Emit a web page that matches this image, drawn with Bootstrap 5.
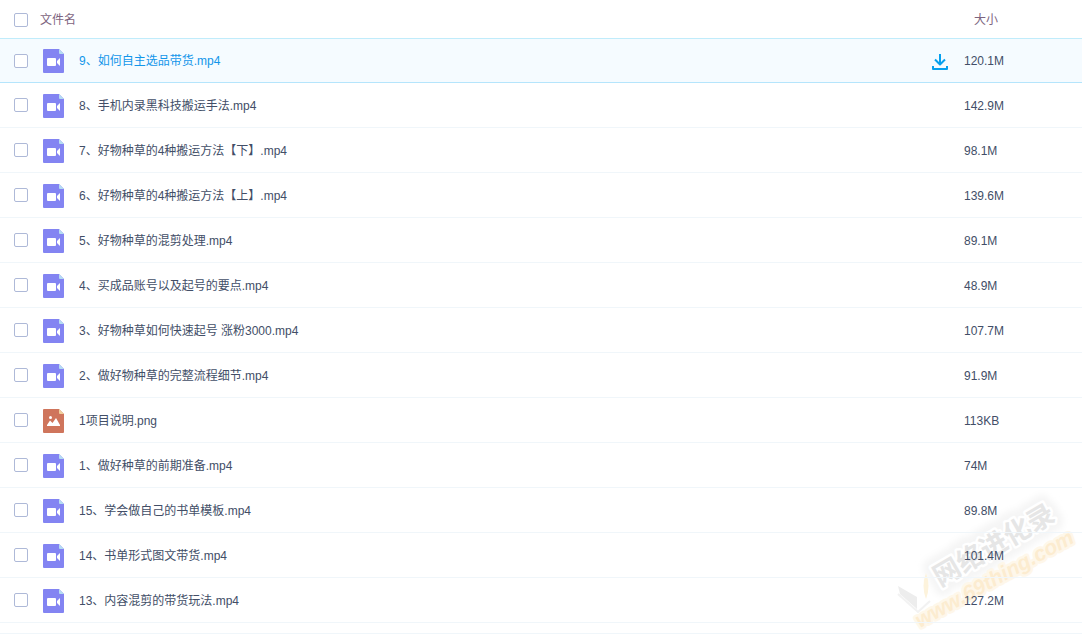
<!DOCTYPE html>
<html lang="zh-CN">
<head>
<meta charset="utf-8">
<meta name="viewport" content="width=device-width, initial-scale=1">
<title>文件列表</title>
<link href="https://cdn.jsdelivr.net/npm/bootstrap@5.3.0/dist/css/bootstrap.min.css" rel="stylesheet">
<style>
  body { font: 12px/18px "Liberation Sans", "Noto Sans CJK SC", sans-serif; color: #424e67; background: #fff; overflow-x: hidden; }
  .file-list { isolation: isolate; }
  .file-table { --bs-table-color: #424e67; --bs-table-bg: transparent; font-size: 12px; table-layout: fixed; border-collapse: separate; border-spacing: 0; }
  .file-table > :not(caption) > * > * { padding: 0; border: 0; height: 45px; border-bottom: 1px solid #f0f6fa; box-shadow: none; vertical-align: middle; }
  .file-table > thead > tr > th { height: 38px; border: 0; padding-top: 2px; font-weight: 400; color: #7d6480; }
  .file-table > tbody > tr > td { padding-top: 1px; }
  .file-table > tbody > tr > td:first-child { padding-top: 0; }
  .file-table > tbody > tr.is-current > td { padding-top: 0; border-top: 1px solid #c0ecfb; border-bottom-color: #b5e5fc; background: #f5fbff; }
  .col-check { width: 40px; }
  .col-icon { width: 39px; }
  .col-action { width: 36px; }
  .col-size { width: 118px; }
  .size-head { padding-left: 10px; }
  .file-table .form-check-input { width: 14px; height: 14px; margin: 0 0 0 14px; border: 1px solid #aeb9d8; border-radius: 2px; }
  .file-link { color: inherit; text-decoration: none; }
  .is-current .file-link { color: #1296ea; }
  .file-icon { width: 21px; height: 24px; margin-left: 3px; }
  .download-btn { width: 16px; height: 16px; color: #06a0ee; margin-top: 3px; margin-left: 4px; }
  .list-end { margin-top: 10px; border-top: 1px solid #f0f6fa; }
  .watermark { right: 0; bottom: 0; width: 190px; height: 144px; z-index: -1; pointer-events: none; }
</style>
</head>
<body>
<svg class="d-none" aria-hidden="true">
  <symbol id="video" viewBox="0 0 21 24">
    <path fill="#8384f2" d="M1 0H16l5 5v18a1 1 0 0 1-1 1H1a1 1 0 0 1-1-1V1a1 1 0 0 1 1-1z"/>
    <path fill="#b5dcf2" d="M16 0l5 5h-4a1 1 0 0 1-1-1z"/>
    <rect x="4" y="9" width="9" height="8" rx="1" fill="#fff"/>
    <path fill="#fff" d="M14 12l3-3v8l-3-3z"/>
  </symbol>
  <symbol id="image" viewBox="0 0 21 24">
    <path fill="#cf755c" d="M1 0H16l5 5v18a1 1 0 0 1-1 1H1a1 1 0 0 1-1-1V1a1 1 0 0 1 1-1z"/>
    <path fill="#f0cf9c" d="M16 0l5 5h-4a1 1 0 0 1-1-1z"/>
    <circle cx="7.500" cy="8.500" r="1.500" fill="#fff"/>
    <path fill="#fff" d="M4 17v-1l3-4.500 2.500 2.500L13 9l4 7v1z"/>
  </symbol>
</svg>
<main class="file-list position-relative overflow-hidden">
  <table class="table file-table mb-0">
    <colgroup><col class="col-check"><col class="col-icon"><col><col class="col-action"><col class="col-size"></colgroup>
    <thead>
      <tr>
        <th scope="col"><input class="form-check-input d-block" type="checkbox" aria-label="全选"></th>
        <th scope="col" colspan="3">文件名</th>
        <th scope="col"><span class="size-head">大小</span></th>
      </tr>
    </thead>
    <tbody id="files"></tbody>
  </table>
  <div class="list-end"></div>
  <svg class="watermark position-absolute" viewBox="0 0 190 144" aria-hidden="true">
    <defs><filter id="glow" x="-20%" y="-60%" width="140%" height="220%"><feGaussianBlur stdDeviation="3"/></filter></defs>
    <g transform="translate(48 97) rotate(-30)" font-family="'Noto Sans CJK SC',sans-serif" font-weight="700" font-size="27">
      <text fill="#f5f5f5" stroke="#f5f5f5" stroke-width="16" stroke-linejoin="round" filter="url(#glow)">网络进化录</text>
      <text fill="#e6e6e6" stroke="#fff" stroke-width="5" stroke-linejoin="round" paint-order="stroke">网络进化录</text>
    </g>
    <path fill="#ededed" d="M6 96l19 11v12L8 104z"/>
    <path fill="none" stroke="#f2f2f2" stroke-width="2" d="M6 104l20 18 12-11"/>
    <path fill="#fdf3dc" d="M34 83q5 13 0 26-5-13 0-26z"/>
    <text transform="translate(28 138) rotate(-29)" font-family="'Liberation Sans',sans-serif" font-weight="700" font-style="italic" font-size="21" fill="#fcecd0" stroke="#fef7ea" stroke-width="5" stroke-linejoin="round" paint-order="stroke">www.69thing.com</text>
  </svg>
</main>
<script>
  const files = [
    ["9、如何自主选品带货.mp4", "120.1M"],
    ["8、手机内录黑科技搬运手法.mp4", "142.9M"],
    ["7、好物种草的4种搬运方法【下】.mp4", "98.1M"],
    ["6、好物种草的4种搬运方法【上】.mp4", "139.6M"],
    ["5、好物种草的混剪处理.mp4", "89.1M"],
    ["4、买成品账号以及起号的要点.mp4", "48.9M"],
    ["3、好物种草如何快速起号 涨粉3000.mp4", "107.7M"],
    ["2、做好物种草的完整流程细节.mp4", "91.9M"],
    ["1项目说明.png", "113KB"],
    ["1、做好种草的前期准备.mp4", "74M"],
    ["15、学会做自己的书单模板.mp4", "89.8M"],
    ["14、书单形式图文带货.mp4", "101.4M"],
    ["13、内容混剪的带货玩法.mp4", "127.2M"]
  ];
  const download = `<button type="button" class="download-btn btn d-block p-0 border-0 rounded-0" aria-label="下载"><svg class="d-block" width="16" height="16" viewBox="0 0 16 16" fill="none" stroke="currentColor" stroke-width="2" stroke-linejoin="round"><path d="M8 0v10M3 5.500l5 5 5-5M1 12v3h14v-3"/></svg></button>`;
  document.getElementById("files").innerHTML = files.map(([name, size], i) => `
    <tr class="${i === 0 ? "is-current" : ""}">
      <td><input class="form-check-input d-block" type="checkbox" id="file-${i}" aria-label="${name}"></td>
      <td><svg class="file-icon d-block"><use href="#${name.endsWith(".png") ? "image" : "video"}"/></svg></td>
      <td class="text-truncate"><a class="file-link" href="#">${name}</a></td>
      <td>${i === 0 ? download : ""}</td>
      <td>${size}</td>
    </tr>`).join("");
</script>
<script src="https://cdn.jsdelivr.net/npm/bootstrap@5.3.0/dist/js/bootstrap.bundle.min.js"></script>
</body>
</html>
